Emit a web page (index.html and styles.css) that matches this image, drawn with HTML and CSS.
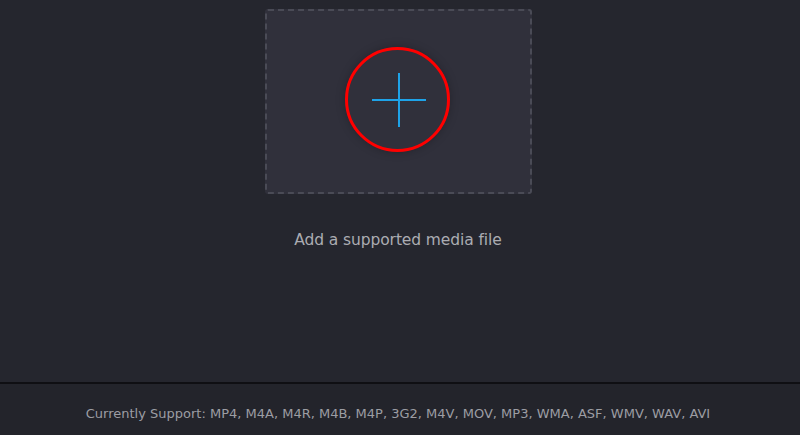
FILE: index.html
```html
<!DOCTYPE html>
<html>
<head>
<meta charset="utf-8">
<link rel="stylesheet" href="styles.css">
</head>
<body>
<div class="app">
  <main class="main">
    <div class="drop">
      <div class="add-btn">
        <svg class="plus" width="56" height="56" viewBox="0 0 56 56">
          <path d="M1 28H55M28 1V55" stroke="#1ea3e8" stroke-width="2" fill="none"/>
        </svg>
      </div>
    </div>
    <p class="hint">Add a supported media file</p>
  </main>
  <footer class="footer">Currently Support: MP4, M4A, M4R, M4B, M4P, 3G2, M4V, MOV, MP3, WMA, ASF, WMV, WAV, AVI</footer>
</div>
</body>
</html>
```
FILE: styles.css
```css
html, body {
  margin: 0;
  padding: 0;
  background: #25262e;
  font-family: "DejaVu Sans", Verdana, sans-serif;
}
.app {
  width: 800px;
  height: 435px;
  display: flex;
  flex-direction: column;
}
.main {
  height: 382px;
  display: flex;
  flex-direction: column;
  align-items: center;
  padding-top: 9px;
  padding-right: 4px;
  box-sizing: border-box;
}
.drop {
  width: 267px;
  height: 185px;
  box-sizing: border-box;
  border: 2px dashed #4a4b56;
  border-radius: 3px;
  background: #30303b;
  display: flex;
  align-items: center;
  justify-content: center;
  padding-bottom: 5px;
  padding-right: 2px;
}
.add-btn {
  width: 105px;
  height: 105px;
  box-sizing: border-box;
  border: 3px solid #ff0000;
  border-radius: 50%;
  display: flex;
  align-items: center;
  justify-content: center;
  box-shadow: 0 0 10px rgba(0,0,0,0.25);
}
.plus {
  margin-left: 4px;
  margin-top: 1px;
}
.hint {
  margin: 37px 0 0;
  color: #abacb2;
  font-size: 15.5px;
  letter-spacing: -0.1px;
}
.footer {
  flex: 1;
  border-top: 2px solid #0f0f13;
  background: #23242b;
  color: #9c9da3;
  font-size: 13px;
  display: flex;
  align-items: center;
  justify-content: center;
  padding-top: 8px;
  padding-right: 4px;
}
```
